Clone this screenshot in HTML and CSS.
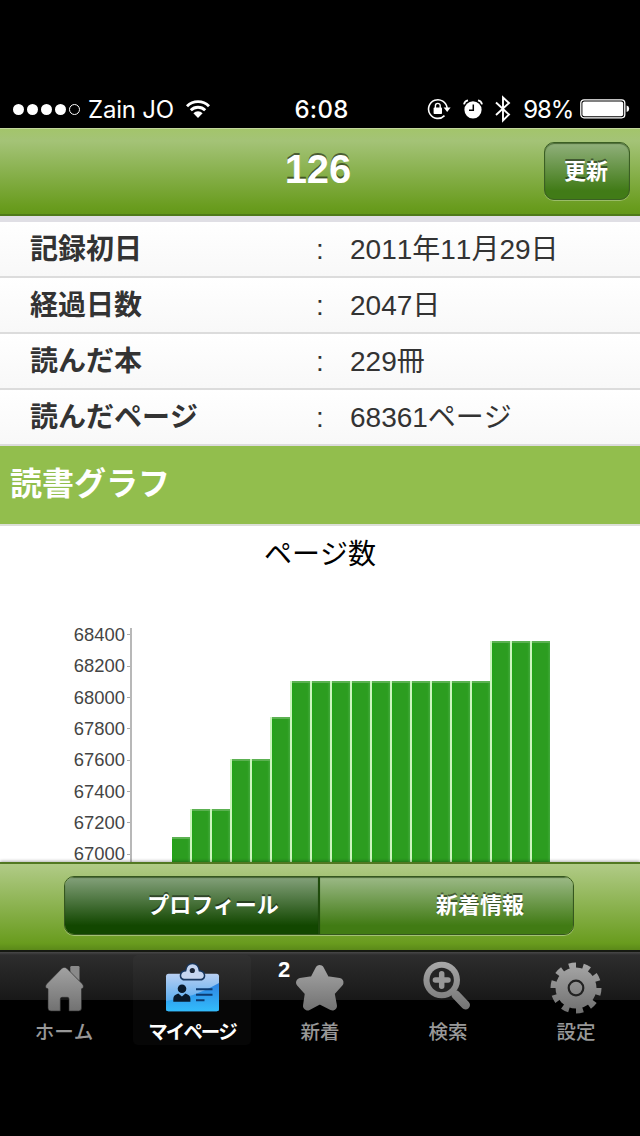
FILE: index.html
```html
<!DOCTYPE html>
<html lang="ja">

<head>
    <meta charset="UTF-8">
    <meta name="viewport" content="width=device-width, initial-scale=1.0">
    <title>マイページ</title>
    <link rel="stylesheet" href="styles.css">
</head>

<body>
    <div class="status">
        <div class="status-left">
            <div class="signal"><i></i><i></i><i></i><i></i><i class="empty"></i></div>
            <span class="carrier">Zain JO</span>
            <svg class="wifi" width="26" height="20" viewBox="0 0 26 20">
                <path d="M2 7.2a15.6 15.6 0 0 1 22 0M5.8 11.2a10.2 10.2 0 0 1 14.4 0" fill="none" stroke="#fff" stroke-width="2.9"/>
                <path d="M8.4 14.2a6.5 6.5 0 0 1 9.2 0L13 19z" fill="#fff"/>
            </svg>
        </div>
        <span class="time">6:08</span>
        <div class="status-right">
            <svg width="24" height="22" viewBox="0 0 24 22">
                <path d="M17.5 17.6A9.3 9.3 0 1 1 20.1 10" fill="none" stroke="#fff" stroke-width="1.6"/>
                <path d="M16.6 9.5h7L20.2 14z" fill="#fff"/>
                <rect x="6.6" y="9.6" width="8.4" height="6.4" rx="0.8" fill="#fff"/>
                <path d="M8.4 10V7.8a2.4 2.4 0 0 1 4.8 0V10" fill="none" stroke="#fff" stroke-width="1.4"/>
            </svg>
            <svg class="alarm" width="20" height="20" viewBox="0 0 20 20">
                <circle cx="10" cy="10.8" r="8.6" fill="#fff"/>
                <path d="M10.3 5.5v5.8H6" fill="none" stroke="#000" stroke-width="1.5"/>
                <path d="M1 5.4Q1.6 2 5 1.4M19 5.4Q18.4 2 15 1.4" fill="none" stroke="#fff" stroke-width="1.8"/>
            </svg>
            <svg class="bluetooth" width="16" height="28" viewBox="0 0 16 28">
                <path d="M1 7.5 14 19.5 8 25.5V2.5L14 8 1 20" fill="none" stroke="#fff" stroke-width="1.9"/>
            </svg>
            <span class="percent">98%</span>
            <svg width="50" height="20" viewBox="0 0 50 20">
                <rect x="0.8" y="0.8" width="44" height="18" rx="3.2" fill="none" stroke="#fff" stroke-width="1.3"/>
                <rect x="2.4" y="2.4" width="40.8" height="14.8" rx="2" fill="#fff"/>
                <path d="M46.6 6.6q2.6.6 2.6 3.2t-2.6 3.2z" fill="#fff"/>
            </svg>
        </div>
    </div>

    <header class="navbar">
        <h1>126</h1>
        <button type="button" class="refresh">更新</button>
    </header>

    <main class="content">
        <dl class="stats">
            <div class="row"><dt>記録初日</dt><dd class="colon">:</dd><dd>2011年11月29日</dd></div>
            <div class="row"><dt>経過日数</dt><dd class="colon">:</dd><dd>2047日</dd></div>
            <div class="row"><dt>読んだ本</dt><dd class="colon">:</dd><dd>229冊</dd></div>
            <div class="row"><dt>読んだページ</dt><dd class="colon">:</dd><dd>68361ページ</dd></div>
        </dl>
        <h2>読書グラフ</h2>
        <section class="graph">
            <h3>ページ数</h3>
            <div class="chart">
                <ul class="scale">
                    <li>68400</li>
                    <li>68200</li>
                    <li>68000</li>
                    <li>67800</li>
                    <li>67600</li>
                    <li>67400</li>
                    <li>67200</li>
                    <li>67000</li>
                </ul>
                <div class="bars">
                    <div class="bar" style="height: 25px"></div>
                    <div class="bar" style="height: 53px"></div>
                    <div class="bar" style="height: 53px"></div>
                    <div class="bar" style="height: 103px"></div>
                    <div class="bar" style="height: 103px"></div>
                    <div class="bar" style="height: 145px"></div>
                    <div class="bar" style="height: 181px"></div>
                    <div class="bar" style="height: 181px"></div>
                    <div class="bar" style="height: 181px"></div>
                    <div class="bar" style="height: 181px"></div>
                    <div class="bar" style="height: 181px"></div>
                    <div class="bar" style="height: 181px"></div>
                    <div class="bar" style="height: 181px"></div>
                    <div class="bar" style="height: 181px"></div>
                    <div class="bar" style="height: 181px"></div>
                    <div class="bar" style="height: 181px"></div>
                    <div class="bar" style="height: 221px"></div>
                    <div class="bar" style="height: 221px"></div>
                    <div class="bar" style="height: 221px"></div>
                </div>
            </div>
        </section>
    </main>

    <div class="toolbar">
        <div class="segments">
            <button type="button" class="segment active">プロフィール</button>
            <button type="button" class="segment">新着情報</button>
        </div>
    </div>

    <nav class="tabs">
        <a class="tab">
            <svg width="56" height="56" viewBox="0 0 56 56">
                <defs>
                    <linearGradient id="gray" gradientUnits="userSpaceOnUse" x1="0" y1="4" x2="0" y2="54">
                        <stop offset="0" stop-color="#a6a6a6"/>
                        <stop offset="1" stop-color="#6e6e6e"/>
                    </linearGradient>
                </defs>
                <path d="M34.3 12.500V7.2q0-1.2 1.2-1.2h6.8q1.2 0 1.2 1.2V21z" fill="#8a8a8a"/>
                <path d="M28.3 7.4q1.500 0 2.600 1L46.400 24q1.600 2 .8 3.600-.6 1-1.700 1.200V48q0 3-3 3H33V39q0-1.700-1.700-1.700h-5.200q-1.800 0-1.800 1.700v12H15q-3 0-3-3V28.800q-1.600-.2-2.200-1.200-.8-1.600.8-3.600L25.800 8.400q1.100-1 2.500-1z" fill="url(#gray)" stroke="#2a2a2a" stroke-width="0.600"/>
            </svg>
            <span>ホーム</span>
        </a>
        <a class="tab selected">
            <svg width="56" height="56" viewBox="0 0 56 56">
                <defs>
                    <linearGradient id="card" x1="0" y1="0" x2="0" y2="1">
                        <stop offset="0" stop-color="#b8cff2"/>
                        <stop offset="1" stop-color="#3ba2ef"/>
                    </linearGradient>
                    <linearGradient id="shine" x1="0" y1="0" x2="0" y2="1">
                        <stop offset="0" stop-color="#2f83e2"/>
                        <stop offset="1" stop-color="#32bcfb"/>
                    </linearGradient>
                </defs>
                <rect x="2" y="13.700" width="53" height="37.500" rx="2.500" fill="url(#card)"/>
                <path d="M2 41Q32 37 55 23v26q0 2.200-2.200 2.200H4.200Q2 51.200 2 49z" fill="url(#shine)"/>
                <path d="M19 20.500q-3.500-1.500-3.300-5.200.5-4.800 5.500-5.200Q22.500 3 28.500 3t7.300 7.100q5 .4 5.500 5.200.2 3.700-3.300 5.200z" fill="#17365e"/>
                <path d="M20.500 18.800q-3.300-.5-3.300-3.600.4-3.600 5-3.800.8-7.200 6.300-7.200t6.300 7.200q4.600.2 5 3.800 0 3.100-3.300 3.600z" fill="#c5d5f0"/>
                <circle cx="28.300" cy="10.500" r="2.600" fill="#1b2638"/>
                <circle cx="18" cy="28.800" r="4.300" fill="#08192b"/>
                <path d="M9.300 41.700v-3q0-3.700 5-5.200l3.600 3 3.500-3q5 1.500 5 5.200v3z" fill="#08192b"/>
                <path d="M32 29.200h16.500M32 34.800h16.500M32 40.200h8.500" stroke="#0c3a70" stroke-width="2"/>
            </svg>
            <span>マイページ</span>
        </a>
        <a class="tab">
            <b class="badge">2</b>
            <svg width="56" height="56" viewBox="0 0 56 56">
                <path d="M27.700 9.500 33.500 20.500 47 22.500 38 32.500 40.500 46 27.700 39.500 15.500 46 17.500 32.500 8.500 22.500 22 20.500z" fill="url(#gray)" stroke="url(#gray)" stroke-width="9" stroke-linejoin="round"/>
            </svg>
            <span>新着</span>
        </a>
        <a class="tab">
            <svg width="56" height="56" viewBox="0 0 56 56">
                <path d="M36 35 45.500 45" stroke="url(#gray)" stroke-width="9" stroke-linecap="round"/>
                <circle cx="21.700" cy="20" r="18.300" fill="url(#gray)"/>
                <circle cx="21.700" cy="20" r="12.200" fill="#242424"/>
                <path d="M21.700 13.700v12.600M15.400 20H28" stroke="#989898" stroke-width="5.500" stroke-linecap="round"/>
            </svg>
            <span>検索</span>
        </a>
        <a class="tab">
            <svg width="56" height="56" viewBox="0 0 56 56">
                <circle cx="28" cy="28" r="20.500" fill="url(#gray)"/>
                <circle cx="28" cy="28" r="22" fill="none" stroke="url(#gray)" stroke-width="7" pathLength="100" stroke-dasharray="5 5"/>
                <circle cx="28" cy="28" r="7.300" fill="none" stroke="#222" stroke-width="2.200"/>
            </svg>
            <span>設定</span>
        </a>
    </nav>
</body>

</html>
```
FILE: styles.css
```css
* {
    box-sizing: border-box;
}

body {
    display: flex;
    flex-direction: column;
    width: 640px;
    height: 1136px;
    margin: 0;
    background-color: #000;
    font-family: "Liberation Sans", "Noto Sans CJK JP", sans-serif;
    font-kerning: none;
    overflow: hidden;
}

h1,
h2,
h3,
dl,
dd,
ul {
    margin: 0;
    padding: 0;
}

button {
    padding: 0;
    border: none;
    color: #fff;
    font: bold 22px "Liberation Sans", "Noto Sans CJK JP", sans-serif;
    text-shadow: 0 -2px 0 rgba(0, 0, 0, 0.45);
}

/* Barra de estado */
.status {
    display: grid;
    grid-template-columns: 1fr 60px 1fr;
    align-items: center;
    flex: none;
    height: 128px;
    padding: 88px 10px 0 13px;
    color: #fff;
    font-family: Inter, sans-serif;
    font-size: 24px;
    line-height: 40px;
}

.status-left,
.status-right {
    display: flex;
    align-items: center;
}

.status-right {
    justify-content: flex-end;
}

.signal {
    display: flex;
    gap: 3px;
}

.signal i {
    width: 11px;
    height: 11px;
    border-radius: 50%;
    background-color: #fff;
}

.signal .empty {
    border: 1px solid #fff;
    background: none;
}

.carrier {
    margin-left: 8px;
    padding-top: 2px;
    letter-spacing: -0.2px;
}

.wifi {
    margin-left: 11px;
}

.time {
    padding-top: 2px;
    font-weight: 500;
    letter-spacing: 0.3px;
    text-align: center;
    white-space: nowrap;
}

.alarm {
    margin-left: 12px;
}

.bluetooth {
    margin-left: 12px;
}

.percent {
    margin: 0 7px 0 12px;
    padding-top: 2px;
    letter-spacing: -1.2px;
}

/* Cabecera */
.navbar {
    display: grid;
    grid-template-columns: 1fr 100px 1fr;
    align-items: center;
    flex: none;
    height: 88px;
    padding: 0 10px 1px 6px;
    border-top: 1px solid #c3d79c;
    border-bottom: 2px solid #4f7a1a;
    background: linear-gradient(#a3c56b, #a4c377 14%, #699c1e 92%, #64981a);
}

.navbar h1 {
    grid-column: 2;
    padding-bottom: 4px;
    color: #fff;
    font-size: 40px;
    line-height: 46px;
    text-align: center;
    text-shadow: 0 -2px 0 rgba(0, 0, 0, 0.5);
}

.refresh {
    justify-self: end;
    width: 86px;
    height: 58px;
    padding: 0 2px 4px 0;
    border: 1px solid #3b5f24;
    border-radius: 10px;
    background: linear-gradient(#91b07c, #417b17 85%);
    box-shadow: 0 1px 0 rgba(255, 255, 255, 0.3), inset 0 1px 1px rgba(30, 60, 10, 0.6);
}

/* Datos de lectura */
.content {
    flex: none;
    height: 646px;
    background-color: #fff;
    overflow: hidden;
}

.stats {
    border-top: 6px solid #e0dfe5;
}

.row {
    display: grid;
    grid-template-columns: 286px 34px 1fr;
    height: 56px;
    padding-left: 30px;
    border-bottom: 2px solid #dcdcdc;
    background: linear-gradient(#fff, #f8f8f8);
    color: #333;
    font-size: 28px;
    line-height: 56px;
}

.row dt {
    font-weight: bold;
}

h2 {
    height: 80px;
    padding-left: 10px;
    border-bottom: 2px solid #dcdfd8;
    background-color: #92be4d;
    color: #fff;
    font-size: 32px;
    line-height: 76px;
}

h3 {
    height: 92px;
    padding-top: 2px;
    font-size: 28px;
    font-weight: normal;
    line-height: 53px;
    text-align: center;
}

/* Grafico */
.chart {
    display: flex;
    align-items: flex-end;
    height: 244px;
    padding: 10px 0 0 60px;
}

.scale {
    width: 72px;
    height: 234px;
    border-right: 2px solid #b8b8b8;
    color: #444;
    font-size: 18.4px;
    line-height: 31.35px;
    list-style: none;
}

.scale li {
    display: flex;
    justify-content: flex-end;
    align-items: center;
    gap: 2px;
    height: 31.35px;
}

.scale li:first-child {
    margin-top: -9px;
}

.scale li::after {
    content: "";
    width: 3px;
    height: 1px;
    background-color: #aaa;
}

.bars {
    display: flex;
    align-items: flex-end;
    margin-left: 38px;
}

.bar {
    width: 20px;
    border-left: 2px solid #cbf5bd;
    background: linear-gradient(90deg, #23a218, #2c9d20 30%, #2c9d20 85%, #41a83a);
    box-shadow: inset 0 2px 0 #5cb152;
}

.bar:first-child {
    border-left-color: #fff;
}

/* Barra inferior */
.toolbar {
    position: relative;
    flex: none;
    height: 88px;
    padding: 12px 66px 0 64px;
    border-top: 2px solid #527822;
    background: linear-gradient(#b1cb87, #699c1e 92%, #5b8919);
    box-shadow: 0 -1px 3px rgba(0, 0, 0, 0.3);
}

.segments {
    display: grid;
    grid-template-columns: 255px 1fr;
    height: 59px;
    border: 1px solid #35571f;
    border-radius: 10px;
    box-shadow: 0 1px 0 rgba(255, 255, 255, 0.35);
    overflow: hidden;
}

.segment {
    padding: 0 0 5px 67px;
    background: linear-gradient(#9cb987, #417b14 85%);
    box-shadow: inset 0 1px 1px rgba(30, 60, 10, 0.6);
}

.segment.active {
    padding-left: 43px;
    border-right: 2px solid #204c0d;
    background: linear-gradient(#84a17b, #124700 85%);
}

.tabs {
    display: flex;
    flex: none;
    height: 100px;
    border-top: 2px solid #171a13;
    background: linear-gradient(#484848, #2d2d2d 3px, #181818 48px, #000 48px);
}

.tab {
    display: flex;
    flex-direction: column;
    align-items: center;
    position: relative;
    width: 118px;
    height: 90px;
    margin: 3px 5px 0;
    padding-top: 5px;
    color: #989898;
    font-size: 19.5px;
    font-weight: 500;
    line-height: 28px;
}

.tab svg {
    flex: none;
}

.tab span {
    margin-top: 2px;
}

.tab.selected {
    border-radius: 5px;
    background-color: rgba(255, 255, 255, 0.025);
    color: #fff;
    font-weight: bold;
    letter-spacing: -2px;
}

.badge {
    position: absolute;
    left: 17px;
    top: 1px;
    color: #fff;
    font-size: 22px;
}
```
